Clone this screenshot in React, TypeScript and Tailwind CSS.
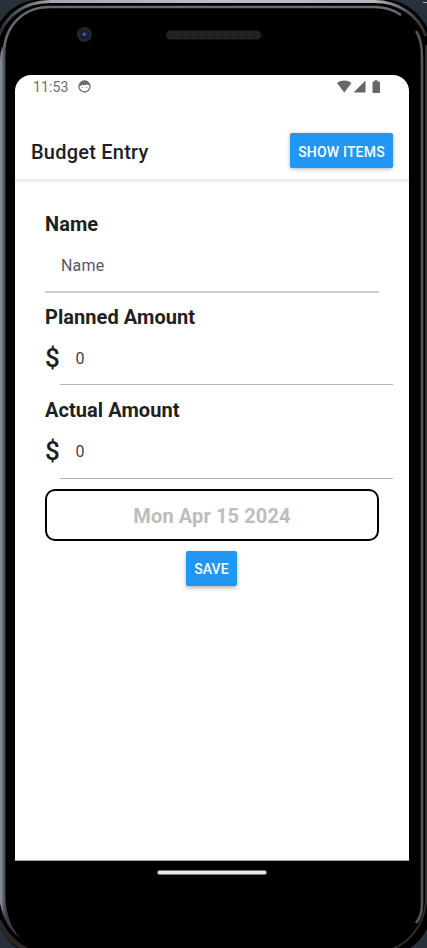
import type { ReactNode } from "react";

function PhoneFrame() {
  return (
    <svg className="absolute inset-0" width="427" height="948" viewBox="0 0 427 948" fill="none">
      <defs>
        <linearGradient id="top" x1="0" y1="0" x2="427" y2="0" gradientUnits="userSpaceOnUse">
          <stop offset="0" stopColor="#2c2d2e" />
          <stop offset="0.06" stopColor="#66696c" />
          <stop offset="0.12" stopColor="#a4a8ac" />
          <stop offset="0.5" stopColor="#bcc0c4" />
          <stop offset="0.88" stopColor="#b4b8bc" />
          <stop offset="0.95" stopColor="#5a5c5e" />
          <stop offset="1" stopColor="#26282a" />
        </linearGradient>
        <linearGradient id="left" x1="0" y1="0" x2="6" y2="0" gradientUnits="userSpaceOnUse">
          <stop offset="0" stopColor="#8d9398" />
          <stop offset="0.4" stopColor="#6f757d" />
          <stop offset="0.6" stopColor="#565c66" />
          <stop offset="1" stopColor="#3a3e47" />
        </linearGradient>
        <pattern id="mesh" width="2" height="2" patternUnits="userSpaceOnUse">
          <rect width="2" height="2" fill="#1c1e1e" />
          <rect width="1" height="1" fill="#2c2f2e" />
        </pattern>
      </defs>
      <rect width="427" height="948" fill="#28303b" />
      <path d="M0 22C9 9 20 2 34 0H392C408 4 419 13 427 27V929Q420 942 410 948H17Q6 940 0 927z" fill="#000" />
      <path d="M-1 36C5 18 22 1.500 50 1.500H374C399 1.500 418 15 426 36" stroke="url(#top)" strokeWidth="3" />
      <path d="M4 54C4 27 22 7 50 7H374C386 7 394 10 401 15" stroke="#696973" strokeWidth="2.600" />
      <path d="M0 62Q0 51 3 46L5.500 47V898C6 914 11 928 20 938C9 930 3 918 0 903z" fill="url(#left)" />
      <path d="M416 31C421 38 422 46 422 58V904C422 912 420 918 416 923" stroke="#56555d" strokeWidth="2.600" />
      <path d="M426 45V902C424 923 411 942 392 949" stroke="#302e2d" strokeWidth="2" />
      <path d="M-1 921C5 934 14 944 27 950" stroke="#292624" strokeWidth="5" />
      <path d="M423 2.500H427" stroke="#a8adb3" />
      <circle cx="84.500" cy="34.500" r="7.500" fill="#262626" />
      <circle cx="84.500" cy="34.500" r="4.500" fill="#171d38" />
      <circle cx="84.500" cy="34.500" r="2" fill="#35437c" />
      <circle cx="83.800" cy="33.800" r="0.800" fill="#8995c5" />
      <rect x="166" y="30.500" width="95" height="9" rx="4.500" fill="url(#mesh)" />
    </svg>
  );
}

function StatusBar() {
  return (
    <div className="flex h-6 items-center pl-[18px] pr-[27px] text-[#6c6c6c]">
      <span className="w-[46px] text-[14px] leading-6 tracking-[0.100px]">11:53</span>
      <svg className="-ml-px -mt-px" width="13" height="13" viewBox="0 0 13 13" fill="none">
        <circle cx="6.500" cy="6.500" r="5.500" stroke="currentColor" strokeWidth="1.300" />
        <path d="M1.500 5C2 2 4 .8 6.500.8s4.500 1.200 5 4.200L9.700 4.900 8.700 4.300 8 4.900H4.500L2 6z" fill="currentColor" />
        <circle cx="4.300" cy="7.500" r=".6" fill="currentColor" />
        <circle cx="8.700" cy="7.500" r=".6" fill="currentColor" />
      </svg>
      <svg className="ml-auto" width="45" height="14" viewBox="0 0 45 14" fill="#666">
        <path d="M0 3C4-.3 10.500-.3 14.500 3L7.250 12.600z" />
        <path d="M28.500.500V12.500H16.500z" />
        <path d="M37.500.300h3v1.200H42q1 0 1 1V12q0 1-1 1h-5.500q-1 0-1-1V2.500q0-1 1-1h1z" />
      </svg>
    </div>
  );
}

function Label({ children }: { children: ReactNode }) {
  return <h2 className="h-6 text-[20px] font-bold leading-6 tracking-[0.060px] text-[#1f1f1f]">{children}</h2>;
}

function AmountField({ label }: { label: string }) {
  return (
    <div className="h-[93.400px]">
      <Label>{label}</Label>
      <div className="flex h-[56.500px] w-[348px]">
        <span className="w-[14.500px] text-[26px] font-medium leading-[59px] text-[#1f1f1f]">$</span>
        <div className="flex-1 border-b border-[#b5b5b5] pl-4 text-[16px] leading-[59px] text-[#444]">0</div>
      </div>
    </div>
  );
}

export default function App() {
  return (
    <div className="relative h-[948px] w-[427px] overflow-hidden bg-black font-['Roboto',sans-serif]">
      <PhoneFrame />
      <div className="relative flex flex-col items-center pt-[75px]">
        <main className="mr-[3px] h-[786px] w-[394px] overflow-hidden rounded-t-[16px] border-b border-[#a5a5a5] bg-white">
          <StatusBar />
          <header className="flex h-[80px] items-center justify-between pl-4 pr-4 pt-[24px] shadow-[0_2px_4px_rgba(0,0,0,0.12)] [clip-path:inset(0_0_-8px_0)]">
            <h1 className="pt-px text-[20px] font-medium leading-6 tracking-[0.230px] text-[#1f1f1f]">Budget Entry</h1>
            <button className="mb-[1px] h-[35px] w-[103px] rounded-[2px] bg-[#2196f3] pt-[3px] text-[14px] font-medium tracking-[0.180px] text-white shadow-[0_1px_4px_rgba(0,0,0,0.3)]">SHOW ITEMS</button>
          </header>
          <form className="pl-[30px] pt-[33px]">
            <div className="h-[92.800px]">
              <Label>Name</Label>
              <div className="h-[57px] w-[334px] border-b-2 border-[#d0d0d0] pl-4 text-[16px] leading-[60px] tracking-[0.160px] text-[#5a575f]">Name</div>
            </div>
            <AmountField label="Planned Amount" />
            <AmountField label="Actual Amount" />
            <div className="-mt-[2.600px] flex h-[52px] w-[334px] items-center justify-center rounded-[10px] border-2 border-black pt-[2px] text-[20px] font-bold tracking-[0.120px] text-[#bdbdbd]">Mon Apr 15 2024</div>
            <div className="flex w-[333px] justify-center pt-[10px]">
              <button className="h-[35px] w-[51px] rounded-[2px] bg-[#2196f3] pt-[3px] text-[14px] font-medium tracking-[0.100px] text-white shadow-[0_2px_4px_rgba(0,0,0,0.3)]">SAVE</button>
            </div>
          </form>
        </main>
        <div className="mr-[3px] mt-[9px] h-[5px] w-[110px] rounded-full border border-[#777] bg-[#e8e8e8]" />
      </div>
    </div>
  );
}
